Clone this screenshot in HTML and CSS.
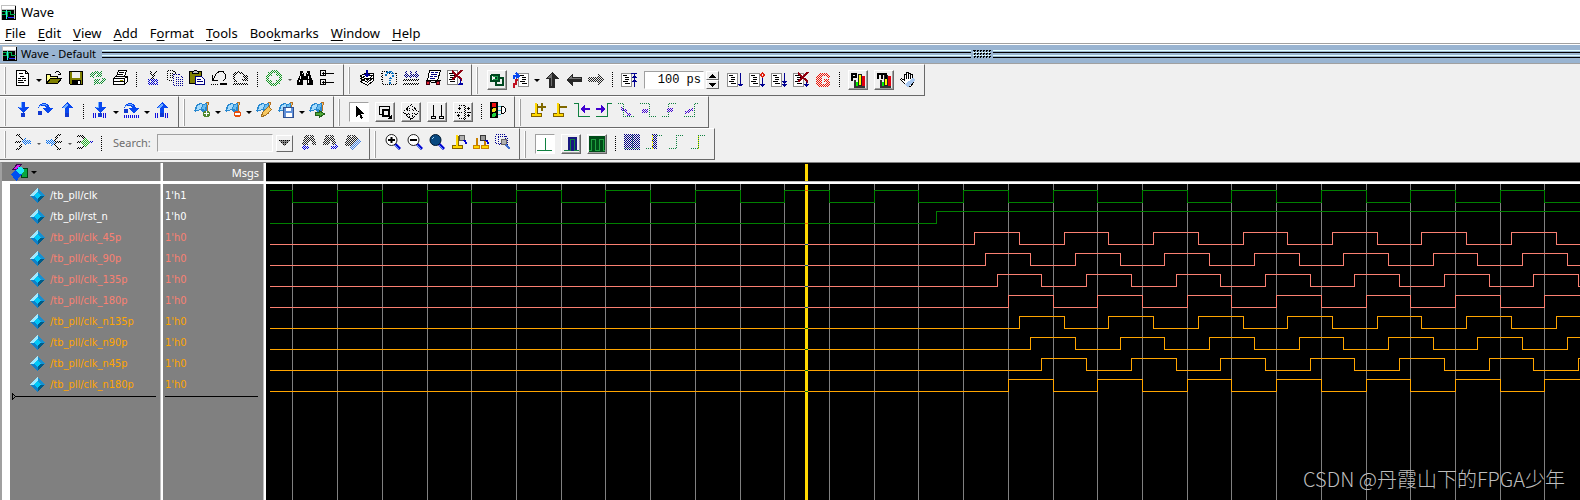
FILE: index.html
```html
<!DOCTYPE html>
<html lang="en">
<head>
<meta charset="utf-8">
<title>Wave</title>
<link rel="stylesheet" href="styles.css">
</head>
<body>
<svg class="defs" aria-hidden="true">
  <defs>
    <pattern id="dots" width="2" height="2" patternUnits="userSpaceOnUse"><path d="M0 0h1v1H0zM1 1h1v1H1z" fill="#fff"/></pattern>
    <mask id="stipple" maskUnits="userSpaceOnUse" x="0" y="0" width="18" height="18"><rect width="18" height="18" fill="url(#dots)"/></mask>
    <symbol id="app" viewBox="0 0 15 15"><path fill="#c0c0c0" d="M0 0h15v15H0z"/><path fill="#fff" d="M1 1h13v3H1z"/><path fill="#000" d="M1 5h12v9H1zM14 1h1v14H1v-1h13z"/><path fill="none" stroke="#00b050" d="M1 6.500h3.500v3H1M6.500 12V6.500h3v3h4"/><path stroke="#30e8f0" d="M5.500 5v9"/><path stroke="#3030ff" d="M7 12.500h6"/></symbol>
    <symbol id="flag" viewBox="0 0 16 16"><path fill="#b87020" d="M12 0h3l-2 12h-3z"/><path fill="#f0c070" d="M13 1h1l-2 9h-1z"/><path fill="#2888d0" d="M3 2l4-1 2 1 4-1v8l-4 1-3-2-5 2-1-1z"/><path fill="#a8dcfc" d="M4 3l3-1 1 1-1 4-5 1z"/><path fill="#68bcf0" d="M9 3l3-1-1 6-3-1z"/></symbol>
    <symbol id="page" viewBox="0 0 16 16"><path fill="#fff" stroke="#909090" d="M.5 1.500h10v13H.5z"/><path stroke="#000" d="M2 3.500h4M4 5.500h4M4 7.500h4M2 9.500h5M4 11.500h5"/></symbol>
    <symbol id="mark" viewBox="0 0 16 16"><path fill="#806000" d="M1 11h11v4H1zM6 2h2v10H6z"/><path fill="#ffd800" d="M2 12h9v2H2zM5 1h2v11H5z"/></symbol>
    <symbol id="lens" viewBox="0 0 16 16"><path stroke="#0000d0" stroke-width="3" d="M10 10l5 5"/><path stroke="#60a0ff" d="M10 11l4 4"/></symbol>
    <symbol id="gem" viewBox="0 0 15 15"><path fill="#a0e8ff" d="M7.500 0v4.500l-3 3H0z"/><path fill="#1890d0" d="M7.500 0L15 7.500h-4.500l-3-3z"/><path fill="#1080c8" d="M0 7.500h4.500l3 3V15z"/><path fill="#005c88" d="M15 7.500h-4.500l-3 3V15z"/><path fill="#00c8f8" d="M7.500 4l3.500 3.500-3.500 3.500L4 7.500z"/></symbol>
    <symbol id="stepdown" viewBox="0 0 16 16"><path fill="#0848f0" d="M6 0h4v5h4L8 11 2 5h4z"/><path fill="#70b0ff" d="M6 0h1v6H4l-1-1h3z"/></symbol>
    <symbol id="stepover" viewBox="0 0 16 16"><path fill="#0848f0" d="M1 6C2 0 11-1 13 6h3l-5 6-5-6h3C8 3 4 3 1 6z"/><path fill="#70b0ff" d="M2 5c2-4 7-4 9-1-3-1-6-2-9 1z"/></symbol>
    <symbol id="stepup" viewBox="0 0 16 16"><path fill="#0848f0" d="M8 0l6 6h-4v5H6V6H2z"/><path fill="#70b0ff" d="M8 1L3 6h3L9 3z"/></symbol>
  </defs>
</svg>

<header class="titlebar"><svg class="app"><use href="#app"/></svg><span>Wave</span></header>
<nav class="menu">
  <button><u>F</u>ile</button><button><u>E</u>dit</button><button><u>V</u>iew</button><button><u>A</u>dd</button><button>F<u>o</u>rmat</button><button><u>T</u>ools</button><button>Boo<u>k</u>marks</button><button><u>W</u>indow</button><button><u>H</u>elp</button>
</nav>
<div class="panebar"><svg class="app"><use href="#app"/></svg><span>Wave - Default</span><i class="rails"></i><i class="grip"></i><i class="rails"></i></div>

<main>
<div class="toolrow">
  <div class="bar">
    <button aria-label="New"><svg viewBox="0 0 16 16"><path fill="#fff" stroke="#000" d="M1.500.5h9l3 3v12h-12zM10.500.5v3h3"/><path stroke="#000" d="M4 3.500h4M5 6.500h4M3 8.500h3m1 0h4M3 10.500h5m1 0h2M3 12.500h6"/></svg></button>
    <button class="drop" aria-label="New options"></button>
    <button aria-label="Open"><svg viewBox="0 0 16 16"><path stroke="#000" fill="none" d="M9 2.500h1m0-1h3m0 1h1m0 1h1M12 4.500h3"/><path fill="#ff8" stroke="#000" d="M.5 13.500v-9h4v2h7v2"/><path fill="#808000" stroke="#000" d="M.5 13.500l4-5h11l-4 5z"/></svg></button>
    <button aria-label="Save"><svg viewBox="0 0 16 16"><path fill="#808000" stroke="#000" d="M1.500 1.500h13v13h-12l-1-1z"/><path fill="#f0f0f0" d="M4 2h8v6H4z"/><path fill="#000" d="M4 10h9v4H4z"/><path fill="#fff" d="M10 11h2v3h-2z"/></svg></button>
    <button aria-label="Reload"><svg viewBox="0 0 16 16"><g mask="url(#stipple)" fill="#109030"><path d="M0 7C0 1 6 0 10 2l2-2v7H5l2-3C5 4 4 5 4 8zM16 8c0 6-6 7-10 5l-2 3V9h7l-2 3c2 0 3-1 3-4z"/></g></svg></button>
    <button aria-label="Print"><svg viewBox="0 0 16 16"><path fill="#fff" stroke="#000" d="M4.500 6.500l2-6h8l-2 6zM1.500 8.500l2-2h12v5l-3 3h-11z"/><path stroke="#000" fill="none" d="M7 2.500h5M6 4.500h5M1.500 8.500h11v6M12.500 8.500l3-2M1 11.500h12"/><path stroke="#a0a000" d="M8 10.500h3"/></svg></button>
    <i class="sep"></i>
    <button aria-label="Cut"><svg viewBox="0 0 16 16"><g mask="url(#stipple)"><path stroke="#000" stroke-width="2" d="M5 1l4 8M11 1L7 9"/><path fill="none" stroke="#0000d0" stroke-width="2" d="M4 10h3v4H4zM9 10h3v4H9z"/></g></svg></button>
    <button aria-label="Copy"><svg viewBox="0 0 16 16"><path fill="none" stroke="#000" stroke-dasharray="1" d="M1 .5h5l3 3M.5 1v9H6M3 3.500h3M3 5.500h3M3 7.500h3"/><path fill="#f0f0f0" stroke="#000090" stroke-dasharray="1" d="M6.500 4.500h6l3 3v8h-9z"/><path stroke="#000090" stroke-dasharray="1" d="M9 7.500h3M9 9.500h5M9 11.500h5M9 13.500h5"/></svg></button>
    <button aria-label="Paste"><svg viewBox="0 0 16 16"><path fill="#808000" stroke="#000" d="M.5 1.500h12v12H.5z"/><path fill="#c0c0c0" stroke="#000" d="M3.500 2.500l2-2h2l2 2v1h-6z"/><path fill="#fff" stroke="#000080" d="M6.500 6.500h6l3 3v5h-9z"/><path stroke="#000080" d="M8 9.500h4M8 11.500h6"/></svg></button>
    <button aria-label="Undo"><svg viewBox="0 0 16 16"><path fill="none" stroke="#000" d="M1.500 5v5.500H7M2 10l3-6 3-2.500h4l2.500 3v4L12 11"/><path stroke="#000" stroke-dasharray="1" d="M0 14.500h8"/><path stroke="#000" stroke-width="2" d="M9 14h7"/></svg></button>
    <button aria-label="Redo"><svg viewBox="0 0 16 16"><g mask="url(#stipple)"><path fill="none" stroke="#000" stroke-width="2" d="M14 5v5H9M14 10l-4-6C7 1 2 2 1 6v3l2 3M0 14h15"/></g></svg></button>
    <i class="sep"></i>
    <button aria-label="Add"><svg viewBox="0 0 16 16"><g mask="url(#stipple)"><circle cx="8" cy="8" r="8" fill="#109820"/><path fill="#f0f0f0" d="M6 3h4v3h3v4h-3v3H6v-3H3V6h3z"/></g></svg></button>
    <button class="drop small" aria-label="Add options"></button>
    <button aria-label="Find"><svg viewBox="0 0 16 16"><path fill="#000" d="M3 1h3v2h1v3h2V3h1V1h3v3l3 7v4H10v-5H6v5H0v-4l3-6z"/><path stroke="#fff" d="M3.500 6v3M2.500 10v2M11.500 6v3M11.500 10v3M5 3.500h1M10 3.500h1"/></svg></button>
    <button aria-label="Expand tree"><svg viewBox="0 0 16 16"><path fill="none" stroke="#000" d="M1.500.5h5v5h-5zM1.500 9.500h5v5h-5zM7 3.500h8M7 12.500h8M3 3.500h3M4.500 2v3M3 12.500h3M4.500 11v3"/></svg></button>
  </div>
  <div class="bar">
    <button aria-label="Compile"><svg viewBox="0 0 16 16"><path fill="#fff" stroke="#000" d="M1.500 11.500l5-3h8v2l-6 5zM1.500 8.500l5-3h8v2l-6 5zM1.500 6l5-3h8v2l-6 5z"/><path fill="#0000a0" d="M7 0h2v4h2L8 8 5 4h2z"/></svg></button>
    <button aria-label="Compile out of date"><svg viewBox="0 0 16 16"><path fill="none" stroke="#000" stroke-dasharray="1" d="M1 1.500h4l2 2h8v11H1zM0 3.500h2M0 6.500h2M0 9.500h2"/><path fill="none" stroke="#0870c0" stroke-width="2" stroke-dasharray="2 1" d="M5 6V4l2-2h3l2 2v2L9 9v2M9 12v2"/></svg></button>
    <button aria-label="Compile all"><svg viewBox="0 0 16 16"><g mask="url(#stipple)" stroke="#000080" stroke-width="2" fill="none"><path d="M3 1v6M8 1v6M13 1v6M1 5l2 2 2-2 3 2 2-2 3 2 2-2"/><path stroke="#000" d="M0 10h16M0 14h16"/></g></svg></button>
    <button aria-label="Simulate"><svg viewBox="0 0 16 16"><path fill="#fff" stroke="#000" d="M4.500.5h11l-3 10h-10z"/><path stroke="#000080" d="M6 2.500h3m1 0h3M6 4.500h6M5 6.500h3m1 0h3M5 8.500h5"/><path fill="#e02030" stroke="#400010" d="M1.500 11.500h3v3h-3zM11.500 11.500h3v3h-3z"/><path fill="none" stroke="#000" d="M.5 10.500h4l2 2h4l1-2h4"/></svg></button>
    <button aria-label="End simulation"><svg viewBox="0 0 16 16"><path fill="#fff" stroke="#808080" d="M.5.5h10v14H.5z"/><path stroke="#000" d="M2 3.500h4M3 5.500h5M3 7.500h5M2 9.500h6M3 11.500h5"/><path stroke="#900010" stroke-width="2" d="M5 1l10 9M15 0L5 10"/><path stroke="#0000a0" d="M13.500 9v5m-2-1h4M11 14.500h5"/></svg></button>
  </div>
  <div class="bar centered">
    <button class="raised" aria-label="Link"><svg viewBox="0 0 16 16"><path fill="none" stroke="#004820" stroke-width="2" d="M2 3h8v6H5M6 6h8v7H7V9M2 3v6h3"/><path fill="none" stroke="#20a050" d="M3.500 4.500h5v3h-5"/></svg></button>
    <button aria-label="Restart"><svg viewBox="0 0 16 16"><path fill="#fff" stroke="#909090" d="M5.500 1.500h10v13h-10z"/><path stroke="#000" d="M7 3.500h4M9 5.500h4M9 7.500h4M7 9.500h5M9 11.500h5"/><path fill="none" stroke="#0848f0" stroke-width="2" d="M1 7V4h4M3 1l3 3-3 2"/><path fill="none" stroke="#c01020" stroke-width="2" d="M5 8H3v4H1v4"/></svg></button>
    <button class="drop" aria-label="Restart options"></button>
    <button aria-label="Up"><svg viewBox="0 0 16 16"><path fill="#282828" d="M8 0l7 7h-4v9H5V7H1z"/><path fill="#707070" d="M8 1L3 6h4v8h1z"/></svg></button>
    <button aria-label="Back"><svg viewBox="0 0 16 16"><path fill="#282828" d="M0 8l7-7v4h9v5H7v5z"/><path fill="#777" d="M2 7l4-4v3h9v1z"/></svg></button>
    <button aria-label="Forward"><svg viewBox="0 0 16 16"><path mask="url(#stipple)" fill="#222" d="M16 8L10 2v3H0v5h10v3z"/></svg></button>
    <i class="sep"></i>
    <button aria-label="Run length"><svg viewBox="0 0 16 16"><use href="#page"/><path fill="none" stroke="#000090" d="M10 1.500h6M13.500 2v13M11 5.500h5M12 4.500h3M11 9.500h5M12 8.500h3"/></svg></button>
    <input class="runlen" aria-label="Run length value" value="100 ps">
    <span class="spin"><button aria-label="Increase"><svg viewBox="0 0 7 4"><path d="M0 4h7L4 0H3z"/></svg></button><button aria-label="Decrease"><svg viewBox="0 0 7 4"><path d="M0 0h7L4 4H3z"/></svg></button></span>
    <button aria-label="Run"><svg viewBox="0 0 16 16"><use href="#page"/><path fill="none" stroke="#000090" d="M13.500 1v13M11 12.500h5M12 13.500h3"/></svg></button>
    <button aria-label="Continue"><svg viewBox="0 0 16 16"><use href="#page"/><path fill="none" stroke="#e02010" d="M13.500 1l2 2-2 2-2-2z"/><path stroke="#000090" d="M13.500 6v9M11 12.500h5M12 13.500h3"/></svg></button>
    <button aria-label="Run all"><svg viewBox="0 0 16 16"><use href="#page"/><path stroke="#000090" d="M13.500 1v14M12 13.500h3M11 12.500h5M12 10.500h3M11 9.500h5"/></svg></button>
    <button aria-label="Stop run"><svg viewBox="0 0 16 16"><use href="#page"/><path stroke="#900010" stroke-width="2" d="M5 1l10 9M15 0L5 10"/><path stroke="#000090" d="M13.500 10v5M11 12.500h5M12 13.500h3"/></svg></button>
    <button aria-label="Break"><svg viewBox="0 0 16 16"><g mask="url(#stipple)"><path fill="#f01000" d="M4 1h8l3 3v2h-3l-2-2H7v8h3l2-2h3v2l-3 3H4l-3-3V4z"/><path fill="#f01000" d="M9 7h5v3H9z"/></g></svg></button>
    <i class="sep"></i>
    <button class="raised" aria-label="Performance profile"><svg viewBox="0 0 16 16"><path fill="#333" d="M4 8h2v5h9v3H4z"/><path fill="#ff0" stroke="#222" d="M8.500 2.500h3v11h-3z"/><path fill="#e00010" d="M12 4h3v10h-3z"/><path fill="#0e0" d="M6 10h2v4H6z"/><path fill-rule="evenodd" d="M1 1h6v5H3v3H1zM3 3h2v1H3z"/></svg></button>
    <button class="raised" aria-label="Memory profile"><svg viewBox="0 0 16 16"><path fill="#333" d="M4 8h2v5h9v3H4z"/><path fill="#ff0" stroke="#222" d="M8.500 3.500h3v10h-3z"/><path fill="#e00010" d="M12 4h3v10h-3z"/><path fill="#0e0" d="M6 10h2v4H6z"/><path d="M1 1h10v6H9V3H7v4H5V3H3v4H1z"/></svg></button>
    <button aria-label="Pan"><svg viewBox="0 0 16 16"><path fill="#fff" stroke="#000" d="M5.500 12.500L.5 7.500l1-1 3 2v-6h2v-2h2v1h2v1h2v3l1 1v4l-3 4z"/><path stroke="#000" d="M6.500 2v5M8.500 1v6M10.500 2v5"/><path fill="#a8c8f0" d="M5 12l8-6 2 2-7 8z"/></svg></button>
  </div>
</div>

<div class="toolrow">
  <div class="bar">
    <button aria-label="Step into"><svg viewBox="0 0 16 16"><use href="#stepdown"/><circle cx="8" cy="13" r="2.500" fill="#1038d0"/></svg></button>
    <button aria-label="Step over"><svg viewBox="0 0 16 16"><use href="#stepover"/><circle cx="3" cy="11" r="2.500" fill="#1038d0"/></svg></button>
    <button aria-label="Step out"><svg viewBox="0 0 16 16"><use href="#stepup"/><circle cx="8" cy="13" r="2.500" fill="#1038d0"/></svg></button>
    <i class="sep"></i>
    <button aria-label="Step into instance"><svg viewBox="0 0 16 16"><use href="#stepdown"/><circle cx="8" cy="13" r="2.500" fill="#1038d0"/><path stroke="#1010e0" stroke-dasharray="1" stroke-width="5" d="M1 13.500h4M11 13.500h4"/></svg></button>
    <button class="drop" aria-label="Step into options"></button>
    <button aria-label="Step over instance"><svg viewBox="0 0 16 16"><use href="#stepover"/><circle cx="3" cy="9" r="2.500" fill="#1038d0"/><path stroke="#1010e0" stroke-dasharray="1" stroke-width="3" d="M1 14.500h15"/></svg></button>
    <button class="drop" aria-label="Step over options"></button>
    <button aria-label="Step out instance"><svg viewBox="0 0 16 16"><use href="#stepup"/><circle cx="8" cy="13" r="2.500" fill="#1038d0"/><path stroke="#1010e0" stroke-dasharray="1" stroke-width="5" d="M1 13.500h4M11 13.500h4"/></svg></button>
  </div>
  <div class="bar">
    <button aria-label="Add bookmark"><svg viewBox="0 0 16 16"><use href="#flag"/><circle cx="12.500" cy="12" r="3.500" fill="#508830"/><path stroke="#fff" d="M10 11.500h5M12.500 9v5"/></svg></button>
    <button class="drop" aria-label="Add bookmark options"></button>
    <button aria-label="Delete bookmark"><svg viewBox="0 0 16 16"><use href="#flag"/><circle cx="12.500" cy="12" r="3.500" fill="#e85010"/><path stroke="#fff" stroke-width="2" d="M10 12h5"/></svg></button>
    <button class="drop" aria-label="Delete bookmark options"></button>
    <button aria-label="Edit bookmark"><svg viewBox="0 0 16 16"><use href="#flag"/><path fill="#f8c860" stroke="#a07020" d="M5.500 14.500l1-4 6-6 3 3-6 6z"/></svg></button>
    <button aria-label="Save bookmark"><svg viewBox="0 0 16 16"><use href="#flag"/><path fill="#6090d8" stroke="#305090" d="M5.500 5.500h10v10h-10z"/><path fill="#fff" d="M8 6h5v3H8zM8 11h6v4H8z"/></svg></button>
    <button class="drop" aria-label="Save bookmark options"></button>
    <button aria-label="Load bookmark"><svg viewBox="0 0 16 16"><use href="#flag"/><path fill="#50a838" stroke="#206018" d="M6.500 10.500h4v-2l5 3.500-5 3.500v-2h-4z"/></svg></button>
  </div>
  <div class="bar">
    <button class="raised on" aria-label="Select mode"><svg viewBox="0 0 16 16"><path d="M5 2v11l3-3 2 5 2-1-2-4h4z"/></svg></button>
    <button class="raised" aria-label="Zoom mode"><svg viewBox="0 0 16 16"><path fill="none" stroke="#000" d="M2.500 2.500h10v8h-10z"/><path fill="#f0f0f0" stroke="#000" stroke-width="2" d="M6 6h6v6H6z"/><path stroke="#000" d="M11 11l4 4"/><path d="M15 10v5h-5z"/></svg></button>
    <button class="raised" aria-label="Pan mode"><svg viewBox="0 0 16 16"><path fill="none" stroke="#000" stroke-dasharray="1" d="M8 .5L11.500 4H9.500v2.500H12v-2L15.500 8 12 11.500v-2H9.500V12h2L8 15.500 4.500 12h2V9.500H4v2L.5 8 4 4.500v2h2.500V4h-2z"/></svg></button>
    <button class="raised" aria-label="Two cursor mode"><svg viewBox="0 0 16 16"><path fill="none" stroke="#000" d="M4.500 1v11M12.500 1v11M2.500 12.500h4v2h-4zM10.500 12.500h4v2h-4z"/></svg></button>
    <button class="raised" aria-label="Edit mode"><svg viewBox="0 0 16 16"><path fill="none" stroke="#000" d="M3 4.500h3M4.500 3v3M2 11.500h3M3.500 10v3M12 4.500h3M13.500 3v3M12 11.500h3M13.500 10v3M12 8.500h4"/><path fill="none" stroke="#000" stroke-dasharray="1" d="M9.500 1v15M4 1.500h6v13H4M0 8.500h7"/></svg></button>
    <i class="sep"></i>
    <button aria-label="Stop drawing"><svg viewBox="0 0 16 16"><path d="M0 0h8v16H0z"/><circle cx="4" cy="3" r="2.500" fill="#f01010"/><circle cx="4" cy="8" r="2" fill="#f8e020"/><circle cx="4" cy="13" r="2" fill="#20d040"/><path fill="#fff" stroke="#000" d="M11.500 4.500h2l2 2v3l-2 2h-2z"/><path stroke="#30b8c0" d="M8 4.500h3M8 8.500h3M8 12.500h3"/></svg></button>
  </div>
  <div class="bar">
    <button aria-label="Insert cursor"><svg viewBox="0 0 16 16"><use href="#mark"/><path stroke="#806800" stroke-width="2" d="M8 5h8M12 1v8"/></svg></button>
    <button aria-label="Delete cursor"><svg viewBox="0 0 16 16"><use href="#mark"/><path stroke="#806800" stroke-width="2" d="M7 5h8"/></svg></button>
    <button aria-label="Previous transition"><svg viewBox="0 0 16 16"><path fill="none" stroke="#108040" d="M0 1.500h4.500v13H16"/><path fill="#4000d0" d="M6 7l5-4v3h5v2h-5v3z"/></svg></button>
    <button aria-label="Next transition"><svg viewBox="0 0 16 16"><path fill="none" stroke="#108040" d="M0 14.500h11.500v-13H16"/><path fill="#4000d0" d="M10 7L5 3v3H0v2h5v3z"/></svg></button>
    <button aria-label="Previous falling edge"><svg viewBox="0 0 16 16"><path fill="none" stroke="#108040" stroke-dasharray="1" d="M0 1.500h5.500v13H16"/><path mask="url(#stipple)" stroke="#4000d0" stroke-width="3" d="M3 6l6 4m0 2h4"/></svg></button>
    <button aria-label="Next falling edge"><svg viewBox="0 0 16 16"><path fill="none" stroke="#108040" stroke-dasharray="1" d="M0 1.500h9.500v13H16"/><path mask="url(#stipple)" stroke="#4000d0" stroke-width="4" d="M2 9h6"/></svg></button>
    <button aria-label="Previous rising edge"><svg viewBox="0 0 16 16"><path fill="none" stroke="#108040" stroke-dasharray="1" d="M0 14.500h6.500v-13H15"/><path mask="url(#stipple)" stroke="#4000d0" stroke-width="4" d="M5 8h6"/></svg></button>
    <button aria-label="Next rising edge"><svg viewBox="0 0 16 16"><path fill="none" stroke="#108040" stroke-dasharray="1" d="M0 14.500h10.500v-13H15"/><path mask="url(#stipple)" stroke="#4000d0" stroke-width="3" d="M1 11l8-4"/></svg></button>
  </div>
</div>

<div class="toolrow">
  <div class="bar">
    <button aria-label="Trace drivers"><svg viewBox="0 0 16 16"><g mask="url(#stipple)" fill="none" stroke="#000" stroke-width="2"><path d="M1 1h3l3 5M0 8h6M1 15h3l3-5"/><path fill="#0870f0" stroke="none" d="M6 8l5-4v2h5v4h-5v2z"/></g></svg></button>
    <button class="drop small" aria-label="Trace drivers options"></button>
    <button aria-label="Trace readers"><svg viewBox="0 0 16 16"><g mask="url(#stipple)" fill="none" stroke="#000" stroke-width="2"><path d="M15 1h-3L9 6v4l3 5h3M10 8h6"/><path fill="#0870f0" stroke="none" d="M10 8L5 4v2H0v4h5v2z"/></g></svg></button>
    <button class="drop small" aria-label="Trace readers options"></button>
    <button aria-label="Trace net"><svg viewBox="0 0 16 16"><g mask="url(#stipple)" fill="none" stroke="#000" stroke-width="2"><path d="M0 2h5l3 3M0 8h4M0 14h5l3-3"/><path fill="#20b020" stroke="none" d="M3 8l5-5 5 5-5 5z"/><path stroke="#0000d0" d="M13 8h3"/></g></svg></button>
    <i class="sep"></i>
    <label class="find" for="find">Search:</label>
    <input class="search" id="find" disabled>
    <button class="combo" aria-label="Search history"><svg viewBox="0 0 11 7"><path fill="#888" d="M0 0h11L6 6H5z"/><path stroke="#000" stroke-dasharray="1" d="M0 .5h11M2 2.500h7M4 4.500h3"/></svg></button>
    <button aria-label="Search backward"><svg viewBox="0 0 16 16"><g mask="url(#stipple)"><path fill="#222" d="M5 1h3v2h1V1h4v2l3 8h-5V7H8l-1 4H1l2-7z"/><path fill="#0000e0" d="M0 13l4-3v2h4v3H4v1z"/></g></svg></button>
    <button aria-label="Search forward"><svg viewBox="0 0 16 16"><g mask="url(#stipple)"><path fill="#222" d="M3 1h3v2h1V1h4v2l3 8H9V7H7l-1 4H0l1-6z"/><path fill="#0000e0" d="M16 13l-4-3v2H8v3h4v1z"/></g></svg></button>
    <button aria-label="Search options"><svg viewBox="0 0 16 16"><g mask="url(#stipple)"><path fill="#222" d="M3 1h3v2h1V1h4l2 3-5 5-2 3H0l1-7z"/><path stroke="#4080e0" stroke-width="3" d="M6 15l9-9"/></g></svg></button>
  </div>
  <div class="bar">
    <button aria-label="Zoom in"><svg class="smooth" viewBox="0 0 16 16"><use href="#lens"/><circle cx="6.500" cy="6" r="5.500" fill="#fff" stroke="#222"/><path stroke="#000" stroke-width="2" d="M3 6h7M6.500 3v6"/></svg></button>
    <button aria-label="Zoom out"><svg class="smooth" viewBox="0 0 16 16"><use href="#lens"/><circle cx="6.500" cy="6" r="5.500" fill="#fff" stroke="#222"/><path stroke="#000" stroke-width="2" d="M3 6h7"/></svg></button>
    <button aria-label="Zoom full"><svg class="smooth" viewBox="0 0 16 16"><use href="#lens"/><circle cx="6.500" cy="6" r="5.500" fill="#084880" stroke="#001830"/><path stroke="#a0d0f0" d="M3 5l2-2"/></svg></button>
    <button aria-label="Zoom on cursor"><svg viewBox="0 0 16 16"><use href="#mark"/><circle cx="11" cy="4" r="3" fill="#b0b0b0" stroke="#555"/><path stroke="#0000d0" stroke-width="2" d="M13 6l3 4"/></svg></button>
    <button aria-label="Zoom between cursors"><svg viewBox="0 0 16 16"><path fill="#c88000" d="M0 11h7v4H0zM8 11h8v4H8zM3 4h2v8H3zM11 6h2v6h-2z"/><path fill="#ffd800" d="M1 12h5v2H1zM9 12h6v2H9z"/><circle cx="10" cy="4" r="3" fill="#999" stroke="#333"/><path stroke="#0000d0" stroke-width="2" d="M13 6l3 4"/></svg></button>
    <button aria-label="Zoom other"><svg viewBox="0 0 16 16"><path fill="none" stroke="#000090" stroke-dasharray="1" d="M1 .5h9v9H.5V1M3 2.500h9v8H3.500V2"/><circle cx="9" cy="8" r="3" fill="#b0b0b0" stroke="#666"/><path stroke="#4070d0" stroke-width="2" d="M11 11l4 4"/></svg></button>
  </div>
  <div class="bar">
    <button class="raised on" aria-label="Show edges"><svg viewBox="0 0 16 16"><path stroke="#108040" d="M0 14.500h15M8.500 2v12"/></svg></button>
    <button class="raised" aria-label="Show pulse"><svg viewBox="0 0 16 16"><path fill="#181880" d="M5 1h9v14H5z"/><path fill="none" stroke="#108040" d="M1 14.500h6.500v-11h4v11H16"/></svg></button>
    <button class="raised" aria-label="Show cycles"><svg viewBox="0 0 16 16"><path fill="#004c18" d="M0 0h16v16H0z"/><path fill="none" stroke="#20a040" d="M0 14.500h2.500v-11h4v11h4v-11h4v11H16"/></svg></button>
    <i class="sep"></i>
    <button aria-label="Fill"><svg viewBox="0 0 16 16"><path mask="url(#stipple)" fill="#000080" d="M0 0h16v16H0z"/><path opacity=".6" stroke="#108040" stroke-dasharray="1" d="M0 14.500h16M8.500 1v14"/></svg></button>
    <button aria-label="Falling window"><svg viewBox="0 0 16 16"><path mask="url(#stipple)" fill="#000080" d="M6 0h5v15H6z"/><path stroke="#f0f000" stroke-dasharray="2 1" d="M6.500 1v14"/><path fill="none" stroke="#108040" stroke-dasharray="1" d="M0 14.500h5M11 1.500h5"/></svg></button>
    <button aria-label="Rising window"><svg viewBox="0 0 16 16"><path fill="none" stroke="#108040" stroke-dasharray="1" d="M1 14.500h7.500v-13H16"/></svg></button>
    <button aria-label="Edge window"><svg viewBox="0 0 16 16"><path stroke="#f0f000" d="M8.500 1v14"/><path fill="none" stroke="#108040" stroke-dasharray="1" d="M1 14.500h7.500v-13H16"/></svg></button>
  </div>
</div>

<section class="wave">
  <div class="head names"><button class="kinds" aria-label="Object kinds"><svg viewBox="0 0 16 16"><path fill="#d020f0" stroke="#400050" d="M1.500 5.500l4-5h4l-4 5z"/><path fill="#08a840" stroke="#004010" d="M9.500 4.500h6v8h-6z"/><path fill="#0050f0" d="M5 5l5 5-5 6-5-6z"/><path fill="#20e8f8" d="M7 3h3l2 2v2l-2 2H8L5 6z"/></svg></button><button class="drop" aria-label="Object kind options"></button></div>
  <div class="head msgs">Msgs</div>
  <div class="head plot"><i class="cursor"></i></div>
  <div class="list names"><ul id="names"></ul><svg class="end" viewBox="0 0 4 7"><path fill="none" stroke="#000" d="M.5.5v6l3-3z"/></svg></div>
  <div class="list msgs"><ul id="msgs"></ul></div>
  <div class="plot body"><svg id="plot" class="traces" role="img" aria-label="Signal waveforms"></svg><p class="credit">CSDN @丹霞山下的FPGA少年</p></div>
</section>
</main>
<script src="wave.js"></script>
</body>
</html>
```
FILE: styles.css
```css
* { box-sizing: border-box; }
body {
  margin: 0;
  min-height: 100vh;
  display: flex;
  flex-direction: column;
  background: #f0f0f0;
  color: #000;
  font: 13px/16px "Noto Sans", sans-serif;
}
button { padding: 0; border: 0; background: none; font: inherit; color: inherit; }
svg { display: block; shape-rendering: crispEdges; }
.defs { position: absolute; width: 0; height: 0; }
.app { width: 15px; height: 15px; flex: none; }

.titlebar { display: flex; align-items: center; gap: 5px; height: 24px; padding-left: 1px; background: #fff; }
.menu { display: flex; gap: 12px; height: 19px; padding: 0 5px; background: #fff; }
.menu button { height: 17px; line-height: 16px; }
.menu u { text-underline-offset: 2px; }
.panebar {
  display: flex;
  align-items: center;
  height: 21px;
  padding-left: 2px;
  border-top: 1px solid #a0a0a0;
  border-bottom: 1px solid #a0a0a0;
  background: #99b4d1;
  box-shadow: inset 0 1px #fff;
  font-size: 11px;
}
.panebar span { margin: 0 6px 0 4px; }
.rails { flex: 870 1 0; height: 8px; background: linear-gradient(#e0ffff 1px, transparent 1px 2px, #000 2px 3px, transparent 3px 5px, #e0ffff 5px 6px, transparent 6px 7px, #000 7px); }
.rails:last-child { flex-grow: 587; }
.grip { width: 18px; height: 8px; margin: 0 2px; background: linear-gradient(#000, #000) 0 0 / 1px 1px, conic-gradient(#000 25%, transparent 0 50%, #e0ffff 0 75%, transparent 0) 0 0 / 3px 3px; background-repeat: no-repeat, repeat; }

main { display: flex; flex-direction: column; flex: 1; }
.toolrow { display: flex; height: 32px; }
.bar {
  display: flex;
  align-items: center;
  padding: 0 5px 0 12px;
  border-top: 1px solid #fff;
  border-right: 1px solid #696969;
  border-bottom: 1px solid #696969;
  background: linear-gradient(#a0a0a0, #a0a0a0) 5px center / 1px 27px no-repeat, linear-gradient(#fff, #fff) 4px center / 1px 27px no-repeat;
}
.bar > button { width: 22px; height: 24px; padding-bottom: 4px; display: grid; place-items: center; flex: none; }
.bar.centered > button { padding-bottom: 0; }
.bar > button svg { width: 16px; height: 16px; }
.bar > .raised {
  width: 20px;
  height: 20px;
  margin: 0 3px;
  padding: 0;
  border: 1px solid;
  border-color: #fff #696969 #696969 #fff;
  box-shadow: inset -1px -1px #a0a0a0;
}
.bar > .on { background: #fff; border-color: #a0a0a0 #fff #fff #a0a0a0; box-shadow: none; }
.bar > .drop { width: 9px; padding: 0; }
.drop::before { content: ""; border: solid transparent; border-width: 3px 3px 0; border-top-color: #000; }
.drop.small::before { border-width: 2px 2px 0; border-top-color: #555; }
.sep { width: 11px; height: 16px; background: repeating-linear-gradient(#000 0 1px, transparent 1px 2px) 5px 0 / 1px 16px no-repeat; }
.runlen {
  width: 60px;
  height: 18px;
  margin: 0 2px 0 4px;
  padding: 0 2px;
  border: 1px solid;
  border-color: #a0a0a0 #fff #fff #a0a0a0;
  background: #fff;
  text-align: right;
  font: 12px/16px "Liberation Mono", monospace;
}
.spin { display: grid; width: 13px; height: 18px; margin-right: 5px; }
.spin button { display: grid; place-items: center; border: 1px solid; border-color: #fff #696969 #696969 #fff; }
.spin svg { width: 7px; height: 4px; }
.find { margin: 0 6px 3px; color: #6d6d6d; font-size: 11px; }
.search { width: 116px; height: 18px; margin-bottom: 2px; border: 1px solid; border-color: #a0a0a0 #fff #fff #a0a0a0; background: #f0f0f0; }
.bar > .combo { width: 17px; height: 17px; margin: 0 5px 2px 3px; padding: 0; border: 1px solid; border-color: #fff #696969 #696969 #fff; }
.bar > .combo svg { width: 11px; height: 7px; }
.smooth { shape-rendering: auto; }

.wave {
  flex: 1;
  display: grid;
  grid-template: 21px 1fr / 161px 103px 1fr;
  margin-top: 2px;
  border-top: 1px solid #808080;
  border-left: 2px solid #a0a0a0;
  background: #fff;
  color: #fff;
  font: 11px/21px "DejaVu Sans Condensed", "DejaVu Sans", sans-serif;
}
.head { display: flex; align-items: center; height: 18px; background: #808080; box-shadow: 0 1px #c0c0c0; }
.names { margin-right: 3px; }
.msgs { margin-right: 3px; }
.head.names { padding-left: 9px; gap: 3px; }
.head .kinds svg { width: 17px; height: 17px; }
.head .drop { display: grid; }
.head.msgs { justify-content: flex-end; padding-right: 4px; font-family: "Noto Sans", sans-serif; }
.names, .msgs { box-shadow: 1px 0 #c0c0c0; }
.plot { background: #000; overflow: hidden; }
.head.plot { align-items: stretch; padding: 1px 0 0 539px; }
.cursor { width: 3px; background: #ffd700; }
.list { background: #808080; padding-top: 1px; }
.list.names { margin-left: 8px; }
ul { list-style: none; margin: 0; padding: 0 0 1px; }
.list li { display: flex; align-items: center; gap: 5px; height: 21px; }
.list.names li { padding-left: 20px; }
.list.msgs li { padding-left: 2px; }
.list li svg { width: 15px; height: 15px; }
.high { color: #fff; }
.salmon { color: #fa8072; }
.orange { color: #ffa500; }
.list ul::after { content: ""; display: block; height: 1px; margin-top: 1px; background: #000; }
.names ul::after { margin: 1px 4px 0 5px; }
.msgs ul::after { margin: 1px 5px 0 2px; }
.end { width: 4px; height: 7px; margin: -5px 0 0 2px; }
.body { position: relative; }
.traces { position: absolute; inset: 0; width: 100%; height: 100%; }
.credit { position: absolute; right: 15px; bottom: 9px; margin: 0; color: #bebebe; font: 300 20px/24px "Noto Sans CJK SC", sans-serif; }
```
FILE: wave.js
```js
const HALF = 44.716;
const ORIGIN = 26.9;
const START = 4;
const CURSOR = 539;
const ROW = 21;

// first: position of the first transition, in half periods after the origin
const signals = [
  { name: "clk", value: "1'h1", tone: "high", stroke: "#008000", first: 0, startHigh: true },
  { name: "rst_n", value: "1'h0", tone: "high", stroke: "#008000", once: 670 },
  { name: "clk_45p", value: "1'h0", tone: "salmon", stroke: "#fa8072", first: 15.25 },
  { name: "clk_90p", value: "1'h0", tone: "salmon", stroke: "#fa8072", first: 15.5 },
  { name: "clk_135p", value: "1'h0", tone: "salmon", stroke: "#fa8072", first: 15.75 },
  { name: "clk_180p", value: "1'h0", tone: "salmon", stroke: "#fa8072", first: 16 },
  { name: "clk_n135p", value: "1'h0", tone: "orange", stroke: "#ffa500", first: 16.25 },
  { name: "clk_n90p", value: "1'h0", tone: "orange", stroke: "#ffa500", first: 16.5 },
  { name: "clk_n45p", value: "1'h0", tone: "orange", stroke: "#ffa500", first: 16.75 },
  { name: "clk_n180p", value: "1'h0", tone: "orange", stroke: "#ffa500", first: 16 }
];
const crossing = { "#008000": "#ff5700", "#fa8072": "#055772", "#ffa500": "#007200" };

const edge = k => Math.floor(ORIGIN + k * HALF) + 0.5;
const plot = document.getElementById("plot");
const width = Math.max(plot.clientWidth, screen.width);

function draw(tag, attrs) {
  const node = document.createElementNS("http://www.w3.org/2000/svg", tag);
  for (const key in attrs) node.setAttribute(key, attrs[key]);
  plot.append(node);
}

let grid = "";
for (let k = 0; edge(k) < width; k++) grid += `M${edge(k)} 0V3000`;
draw("path", { d: grid, stroke: "#808080" });

const marks = [];
signals.forEach((s, i) => {
  const high = 6.5 + i * ROW;
  const low = high + 12;
  let d;
  if (s.once) {
    d = `M${START} ${low}H${s.once + 0.5}V${high}H${width}`;
  } else {
    let level = s.startHigh ? high : low;
    d = `M${START} ${level}`;
    for (let k = s.first; edge(k) < width; k++) {
      level = level === high ? low : high;
      d += `H${edge(k)}V${level}`;
    }
    d += `H${width}`;
  }
  draw("path", { d, stroke: s.stroke, fill: "none" });
  marks.push({ x: CURSOR, y: (s.startHigh ? high : low) - 0.5, width: 3, height: 1, fill: crossing[s.stroke] });
});
draw("rect", { x: CURSOR, y: 1, width: 3, height: "100%", fill: "#ffd700" });
marks.forEach(m => draw("rect", m));

document.getElementById("names").innerHTML = signals
  .map(s => `<li class="${s.tone}"><svg><use href="#gem"/></svg>/tb_pll/${s.name}</li>`).join("");
document.getElementById("msgs").innerHTML = signals
  .map(s => `<li class="${s.tone}">${s.value}</li>`).join("");
```
